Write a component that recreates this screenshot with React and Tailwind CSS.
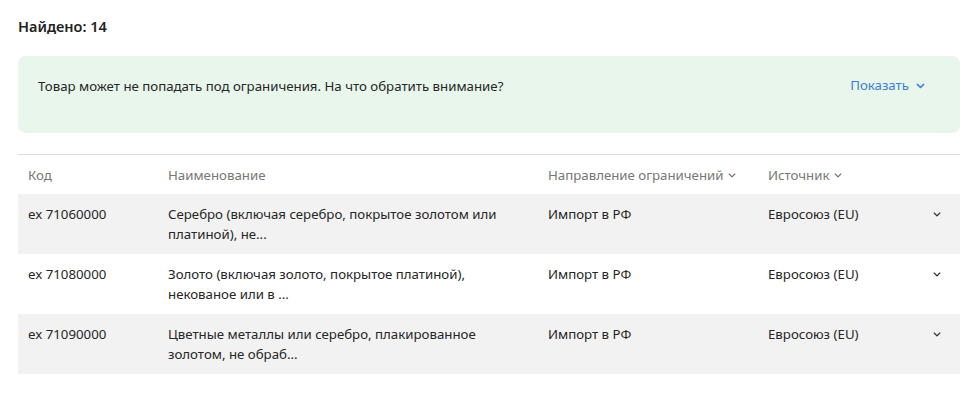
import React from "react";

const Chevron = ({ className = "" }) => (
  <svg viewBox="0 0 10 6" className={className} fill="none" stroke="currentColor" strokeWidth="1.6" strokeLinecap="round" strokeLinejoin="round">
    <path d="M1.5 1.2 L5 4.7 L8.5 1.2" />
  </svg>
);

const rows = [
  { code: "ex 71060000", name: ["Серебро (включая серебро, покрытое золотом или", "платиной), не..."] },
  { code: "ex 71080000", name: ["Золото (включая золото, покрытое платиной),", "некованое или в ..."] },
  { code: "ex 71090000", name: ["Цветные металлы или серебро, плакированное", "золотом, не обраб..."] },
];

export default function App() {
  return (
    <div className="w-[978px] h-[400px] bg-white px-[18px] pt-[16px] text-[13.25px] text-[#262626]" style={{ fontFamily: "'Segoe UI', 'Noto Sans', 'Open Sans', sans-serif" }}>
      <div className="text-[14.5px] font-semibold leading-[20px] text-[#222]">Найдено: 14</div>
      <div className="mt-[20px] h-[77px] rounded-[8px] bg-[#e9f6ec] flex items-center justify-between pl-[20px] pr-[35px] pb-[18px]">
        <span className="leading-[20px]">Товар может не попадать под ограничения. На что обратить внимание?</span>
        <span className="flex items-center gap-[7px] text-[#3a7fd5]">
          Показать
          <Chevron className="w-[9px] h-[6px]" />
        </span>
      </div>
      <div className="mt-[21px] border-t border-[#dddddd]">
        <div className="grid grid-cols-[150px_380px_220px_1fr_40px] h-[39px] pt-[2px] items-center text-[#777]">
          <div className="pl-[10px]">Код</div>
          <div>Наименование</div>
          <div className="flex items-center gap-[4px]">Направление ограничений <Chevron className="w-[8px] h-[5px]" /></div>
          <div className="flex items-center gap-[4px]">Источник <Chevron className="w-[8px] h-[5px]" /></div>
          <div />
        </div>
        {rows.map((r, i) => (
          <div key={i} className={`grid grid-cols-[150px_380px_220px_1fr_40px] h-[60px] pt-[10px] leading-[20px] ${i % 2 === 0 ? "bg-[#f2f2f2]" : "bg-white"}`}>
            <div className="pl-[10px]">{r.code}</div>
            <div>
              {r.name.map((l, j) => (
                <div key={j}>{l}</div>
              ))}
            </div>
            <div>Импорт в РФ</div>
            <div>Евросоюз (EU)</div>
            <div className="flex justify-start pt-[8px] pl-[13px]">
              <Chevron className="w-[8px] h-[5px] text-[#333]" />
            </div>
          </div>
        ))}
      </div>
    </div>
  );
}
